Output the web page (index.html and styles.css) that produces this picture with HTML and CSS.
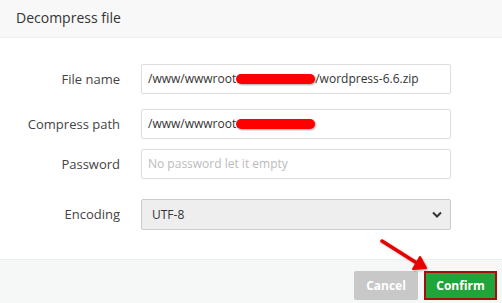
FILE: index.html
```html
<!DOCTYPE html>
<html lang="en">
<head>
    <meta charset="UTF-8">
    <meta name="viewport" content="width=device-width, initial-scale=1.0">
    <link rel="stylesheet" href="styles.css">
</head>
<body>
    <div class="dialog">
        <div class="dialog-title">Decompress file</div>
        <div class="dialog-body">
            <div class="form-row row-name">
                <label class="form-label">File name</label>
                <div class="form-input">/www/wwwroot<span class="blot blot-name"></span>/wordpress-6.6.zip</div>
            </div>
            <div class="form-row row-path">
                <label class="form-label">Compress path</label>
                <div class="form-input">/www/wwwroot<span class="blot blot-path"></span></div>
            </div>
            <div class="form-row row-pass">
                <label class="form-label">Password</label>
                <div class="form-input placeholder">No password let it empty</div>
            </div>
            <div class="form-row">
                <label class="form-label">Encoding</label>
                <div class="form-select">
                    <span>UTF-8</span>
                    <svg class="chevron" width="10" height="7" viewBox="0 0 10 7"><path d="M1 1.5 L5 5.5 L9 1.5" fill="none" stroke="#333" stroke-width="2"/></svg>
                </div>
            </div>
        </div>
        <div class="dialog-footer">
            <button type="button" class="btn btn-cancel">Cancel</button>
            <button type="button" class="btn btn-confirm">Confirm</button>
        </div>
        <svg class="arrow" width="80" height="50" viewBox="0 0 80 50">
            <path d="M6 6 L44 30" stroke="#e80000" stroke-width="3.5" stroke-linecap="round"/>
            <path d="M37 34 L50 33 L44 22 Z" fill="#e80000" stroke="#e80000" stroke-width="2" stroke-linejoin="round"/>
        </svg>
    </div>
</body>
</html>
```

FILE: styles.css
```css
body {
    margin: 0;
    font-family: "Open Sans", "Noto Sans", sans-serif;
    color: #333;
    background: #fff;
}
.dialog {
    position: relative;
    width: 502px;
    height: 303px;
    overflow: hidden;
}
.dialog-title {
    height: 37px;
    line-height: 36px;
    padding-left: 16px;
    font-size: 14px;
    background: #f8f8f8;
    border-bottom: 1px solid #eee;
}
.dialog-body {
    padding: 26px 0 30px 0;
}
.form-row {
    display: flex;
    align-items: center;
    height: 30px;
}
.row-name {
    margin-bottom: 15px;
}
.row-path {
    margin-bottom: 10px;
}
.row-pass {
    margin-bottom: 20px;
}
.form-label {
    width: 120px;
    margin-right: 21px;
    text-align: right;
    font-size: 13px;
    color: #444;
}
.form-input {
    box-sizing: border-box;
    width: 310px;
    height: 30px;
    line-height: 28px;
    padding-left: 6px;
    border: 1px solid #ddd;
    border-radius: 2px;
    font-size: 12px;
    color: #333;
    white-space: nowrap;
}
.placeholder {
    color: #bbb;
}
.blot {
    display: inline-block;
    height: 10px;
    vertical-align: -1px;
    background: #ff0000;
    border-radius: 5px;
    box-shadow: 1px 1px 2px rgba(0,0,0,0.35);
}
.blot-name {
    width: 79px;
}
.blot-path {
    width: 79px;
}
.form-select {
    box-sizing: border-box;
    display: flex;
    align-items: center;
    justify-content: space-between;
    width: 310px;
    height: 31px;
    padding: 0 8px 0 10px;
    background: #eee;
    border: 1px solid #ccc;
    border-radius: 2px;
    font-size: 12px;
}
.dialog-footer {
    display: flex;
    justify-content: flex-end;
    gap: 6px;
    height: 44px;
    padding: 11px 5px 0 0;
    box-sizing: border-box;
    background: #f6f7f7;
    border-top: 1px solid #eee;
}
.btn {
    height: 29px;
    border: 0;
    border-radius: 2px;
    font-family: "Open Sans", "Noto Sans", sans-serif;
    font-size: 12px;
    font-weight: bold;
    color: #fff;
}
.btn-cancel {
    width: 64px;
    background: #c8c8c8;
}
.btn-confirm {
    width: 73px;
    background: #20a53a;
    border: 2px solid #a01010;
    border-radius: 0;
}
.arrow {
    position: absolute;
    left: 376px;
    top: 235px;
    filter: drop-shadow(1px 1px 1px rgba(0,0,0,0.3));
}
```
